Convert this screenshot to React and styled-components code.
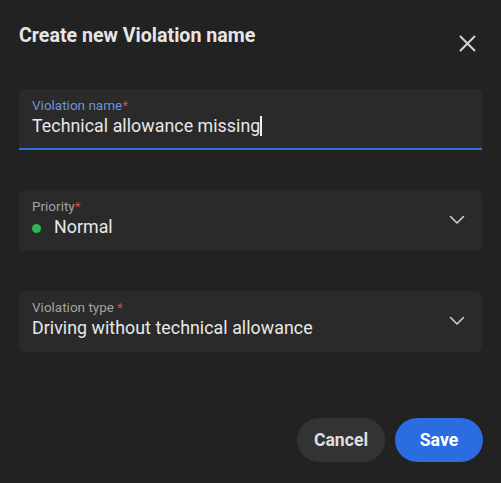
import styled, { createGlobalStyle } from 'styled-components'

const Global = createGlobalStyle`
  html, body { margin: 0; padding: 0; background: #222222; }
  body { font-family: Roboto, "Liberation Sans", Arial, sans-serif; }
`

const Dialog = styled.div`
  width: 501px;
  height: 483px;
  box-sizing: border-box;
  background: #222222;
  padding: 23px 19px 21px 19px;
  display: flex;
  flex-direction: column;
`

const Header = styled.div`
  display: flex;
  justify-content: space-between;
  align-items: flex-start;
  height: 66px;
`

const Title = styled.h1`
  margin: 0;
  font-size: 19.6px;
  line-height: 26px;
  font-weight: 700;
  color: #e6e6e6;
`

const CloseButton = styled.button`
  background: none;
  border: none;
  padding: 0;
  margin: 8px 3px 0 0;
  width: 24px;
  height: 24px;
  display: flex;
  align-items: center;
  justify-content: center;
  color: #d6d6d6;
  cursor: pointer;
`

const Fields = styled.div`
  display: flex;
  flex-direction: column;
  gap: 40px;
`

const Field = styled.div`
  background: #2a2a2a;
  border-radius: 6px 6px ${p => (p.$focused ? '0 0' : '6px 6px')};
  border-bottom: 2px solid ${p => (p.$focused ? '#2f6fdb' : 'transparent')};
  height: 61px;
  box-sizing: border-box;
  padding: 7px 13px 0 13px;
  display: flex;
  align-items: flex-start;
`

const FieldBody = styled.div`
  flex: 1;
  min-width: 0;
`

const Label = styled.div`
  font-size: 13.5px;
  line-height: 18px;
  color: ${p => (p.$focused ? '#6e93d8' : '#a3a3a3')};
`

const Req = styled.span`
  color: #d9434f;
  margin-left: ${p => (p.$spaced ? '3px' : '0')};
`

const Value = styled.div`
  font-size: 17.8px;
  line-height: 24px;
  letter-spacing: 0.05px;
  color: #e8e8e8;
  display: flex;
  align-items: center;
  white-space: nowrap;
`

const Caret = styled.span`
  display: inline-block;
  width: 1.5px;
  height: 20px;
  background: #f0f0f0;
`

const Dot = styled.span`
  width: 9px;
  height: 9px;
  border-radius: 50%;
  background: #2fb551;
  margin: 3px 13px 0 0;
  flex-shrink: 0;
`

const Chevron = styled.div`
  color: #cfcfcf;
  display: flex;
  margin: 18px 4px 0 0;
`

const Footer = styled.div`
  margin-top: auto;
  margin-right: -1px;
  display: flex;
  justify-content: flex-end;
  gap: 10px;
`

const Button = styled.button`
  height: 44px;
  min-width: 88px;
  padding: 0 16px;
  border: none;
  border-radius: 22px;
  font-family: inherit;
  font-size: 17.6px;
  font-weight: 700;
  color: ${p => (p.$primary ? '#ffffff' : '#dedede')};
  background: ${p => (p.$primary ? '#2b6ce0' : '#333333')};
  cursor: pointer;
`

function ChevronIcon() {
  return (
    <svg width="16" height="10" viewBox="0 0 16 10" fill="none">
      <path d="M1.5 1.5 8 8l6.5-6.5" stroke="currentColor" strokeWidth="1.6" strokeLinecap="round" strokeLinejoin="round" />
    </svg>
  )
}

export default function App() {
  return (
    <>
      <Global />
      <Dialog>
        <Header>
          <Title>Create new Violation name</Title>
          <CloseButton aria-label="Close">
            <svg width="17" height="17" viewBox="0 0 17 17" fill="none">
              <path d="M1.5 1.5l14 14M15.5 1.5l-14 14" stroke="currentColor" strokeWidth="1.9" strokeLinecap="round" />
            </svg>
          </CloseButton>
        </Header>

        <Fields>
          <Field $focused>
            <FieldBody>
              <Label $focused>Violation name<Req>*</Req></Label>
              <Value>Technical allowance missing<Caret /></Value>
            </FieldBody>
          </Field>

          <Field>
            <FieldBody>
              <Label>Priority<Req>*</Req></Label>
              <Value><Dot />Normal</Value>
            </FieldBody>
            <Chevron><ChevronIcon /></Chevron>
          </Field>

          <Field>
            <FieldBody>
              <Label>Violation type<Req $spaced>*</Req></Label>
              <Value>Driving without technical allowance</Value>
            </FieldBody>
            <Chevron><ChevronIcon /></Chevron>
          </Field>
        </Fields>

        <Footer>
          <Button>Cancel</Button>
          <Button $primary>Save</Button>
        </Footer>
      </Dialog>
    </>
  )
}
